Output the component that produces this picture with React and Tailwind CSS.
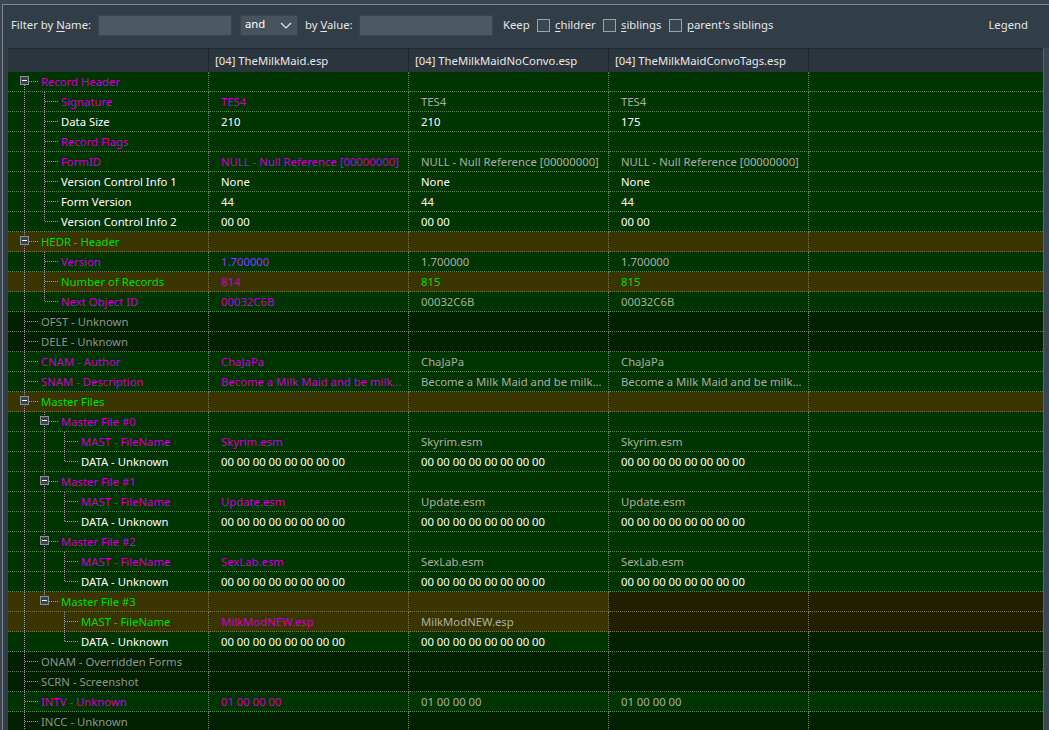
import React from 'react';

const M = 'text-[#cc00cc]';
const G = 'text-[#00dd00]';
const W = 'text-white';
const S = 'text-[#a9ada3]';
const L = 'text-[#8e938e]';
const P = 'text-[#8a3cff]';

const GREEN = 'bg-[#003400]';
const BROWN = 'bg-[#3a3400]';
const DARK = 'bg-[#002000]';
const DBROWN = 'bg-[#221f00]';

const BG = {
  g: [GREEN, GREEN, GREEN, GREEN, GREEN],
  b: [BROWN, BROWN, BROWN, BROWN, BROWN],
  d: [DARK, DARK, DARK, DARK, DARK],
  m: [BROWN, BROWN, BROWN, DBROWN, DBROWN],
  md: [GREEN, GREEN, GREEN, DARK, DARK],
};

const NULLREF = 'NULL - Null Reference [00000000]';
const DESC = 'Become a Milk Maid and be milk...';
const ZEROS = '00 00 00 00 00 00 00 00';

const same = (t, c1, c2 = c1) => [[t, c1], [t, c2], [t, c2]];

const master = (n, file) => [
  { t: `Master File #${n}`, l: 1, box: true, c: M, bg: 'g', v: [] },
  { t: 'MAST - FileName', l: 2, c: M, bg: 'g', v: [[file, M], [file, S], [file, S]] },
  { t: 'DATA - Unknown', l: 2, c: W, bg: 'g', v: same(ZEROS, W), last: true },
];

const rows = [
  { t: 'Record Header', l: 0, box: true, c: M, bg: 'g', v: [], first: true },
  { t: 'Signature', l: 1, c: M, bg: 'g', v: same('TES4', M, S) },
  { t: 'Data Size', l: 1, c: W, bg: 'g', v: [['210', W], ['210', W], ['175', W]] },
  { t: 'Record Flags', l: 1, c: M, bg: 'g', v: [] },
  { t: 'FormID', l: 1, c: M, bg: 'g', v: same(NULLREF, M, S) },
  { t: 'Version Control Info 1', l: 1, c: W, bg: 'g', v: same('None', W) },
  { t: 'Form Version', l: 1, c: W, bg: 'g', v: same('44', W) },
  { t: 'Version Control Info 2', l: 1, c: W, bg: 'g', v: same('00 00', W), last: true },
  { t: 'HEDR - Header', l: 0, box: true, c: G, bg: 'b', v: [] },
  { t: 'Version', l: 1, c: M, bg: 'g', v: [['1.700000', P], ['1.700000', S], ['1.700000', S]] },
  { t: 'Number of Records', l: 1, c: G, bg: 'b', v: [['814', M], ['815', G], ['815', G]] },
  { t: 'Next Object ID', l: 1, c: M, bg: 'g', v: same('00032C6B', M, S), last: true },
  { t: 'OFST - Unknown', l: 0, c: L, bg: 'd', v: [] },
  { t: 'DELE - Unknown', l: 0, c: L, bg: 'd', v: [] },
  { t: 'CNAM - Author', l: 0, c: M, bg: 'g', v: same('ChaJaPa', M, S) },
  { t: 'SNAM - Description', l: 0, c: M, bg: 'g', v: same(DESC, M, S) },
  { t: 'Master Files', l: 0, box: true, c: G, bg: 'b', v: [] },
  ...master(0, 'Skyrim.esm'),
  ...master(1, 'Update.esm'),
  ...master(2, 'SexLab.esm'),
  { t: 'Master File #3', l: 1, box: true, c: G, bg: 'm', v: [], last: true },
  { t: 'MAST - FileName', l: 2, c: G, bg: 'm', v: [['MilkModNEW.esp', M], ['MilkModNEW.esp', S]], tail: true },
  { t: 'DATA - Unknown', l: 2, c: W, bg: 'md', v: [[ZEROS, W], [ZEROS, W]], last: true, tail: true },
  { t: 'ONAM - Overridden Forms', l: 0, c: L, bg: 'd', v: [] },
  { t: 'SCRN - Screenshot', l: 0, c: L, bg: 'd', v: [] },
  { t: 'INTV - Unknown', l: 0, c: M, bg: 'g', v: same('01 00 00 00', M, S) },
  { t: 'INCC - Unknown', l: 0, c: L, bg: 'd', v: [] },
];

function Tree({ row }) {
  const { l, box, last, first, tail } = row;
  const anc = l === 0 ? [] : l === 1 ? [0] : tail ? [0] : [0, 1];
  const x = 16.5 + 20 * l;
  const line = { stroke: '#9a9d9a', strokeDasharray: '1 1', strokeWidth: 1 };
  return (
    <svg width={33 + 20 * l} height={19} className="shrink-0" shapeRendering="crispEdges">
      {anc.map((k) => (
        <line key={k} x1={16.5 + 20 * k} x2={16.5 + 20 * k} y1={0} y2={19} {...line} />
      ))}
      <line x1={x} x2={x} y1={first ? 9 : 0} y2={last ? 9.5 : 19} {...line} />
      <line x1={x} x2={x + 13} y1={9.5} y2={9.5} {...line} />
      {box && (
        <g>
          <rect x={x - 4} y={4.5} width={8} height={8} fill="#3b4149" stroke="#8b9198" />
          <line x1={x - 2.5} x2={x + 2.5} y1={8.5} y2={8.5} stroke="#ffffff" />
        </g>
      )}
    </svg>
  );
}

function Check({ u, rest }) {
  return (
    <div className="flex items-center">
      <span className="w-[13px] h-[13px] border border-[#9aa2aa] bg-[#3a4650] shrink-0" />
      <span className="ml-[5px] whitespace-nowrap">
        <span className="underline underline-offset-2">{u}</span>{rest}
      </span>
    </div>
  );
}

export default function App() {
  return (
    <div
      className="h-[730px] w-full overflow-hidden bg-[#3a4650] pt-[4px] pl-[2px] text-[11.3px] text-[#e4e6e8]"
      style={{ fontFamily: '"Noto Sans", "Open Sans", sans-serif' }}
    >
      <div className="h-full flex flex-col border-t border-l border-[#7c8590] bg-[#313d47]">
        <div className="h-[43px] shrink-0 flex items-center pb-[2px] pl-[8px] pr-[21px]">
          <span className="w-[87px] whitespace-nowrap">
            Filter by <span className="underline underline-offset-2">N</span>ame:
          </span>
          <div className="w-[134px] h-[21px] bg-[#4c5862] border border-[#3a444e]" />
          <div className="ml-[8px] w-[58px] h-[21px] bg-[#46525c] border border-[#3a444e] flex items-center justify-between pl-[4px] pr-[5px]">
            <span className="leading-none -mt-[3px] text-white">and</span>
            <svg width="12" height="7" viewBox="0 0 12 7">
              <path d="M1 1 L6 6 L11 1" fill="none" stroke="#e8eaec" strokeWidth="1.2" />
            </svg>
          </div>
          <span className="ml-[7px] w-[54px] whitespace-nowrap">
            by <span className="underline underline-offset-2">V</span>alue:
          </span>
          <div className="w-[134px] h-[21px] bg-[#4c5862] border border-[#3a444e]" />
          <span className="ml-[10px] w-[34px]">Keep</span>
          <div className="w-[66px]"><Check u="c" rest="hildrer" /></div>
          <div className="w-[66px]"><Check u="s" rest="iblings" /></div>
          <Check u="p" rest="arent's siblings" />
          <span className="ml-auto">Legend</span>
        </div>

        <div className="ml-[5px] flex-1 flex flex-col border-r-[5px] border-[#3a4650] overflow-hidden">
          <div className="flex flex-col flex-1 border-r border-[#5b6570] overflow-hidden">
            <div className="h-[24px] shrink-0 flex bg-[#2b353e] border-t border-[#222a31] text-[#e8e8e8]">
              <div className="w-[201px] border-r border-[#1e262d]" />
              {['[04] TheMilkMaid.esp', '[04] TheMilkMaidNoConvo.esp', '[04] TheMilkMaidConvoTags.esp'].map((h) => (
                <div key={h} className="w-[200px] border-r border-[#1e262d] pl-[6px] pt-[1px] flex items-center whitespace-nowrap">
                  {h}
                </div>
              ))}
              <div className="flex-1" />
            </div>

            {rows.map((r, i) => {
              const bg = BG[r.bg];
              return (
                <div key={i} className="h-[20px] shrink-0 flex">
                  <div className={`w-[201px] flex items-center border-r border-b border-dotted border-[#6c6f80] ${bg[0]}`}>
                    <Tree row={r} />
                    <span className={`whitespace-nowrap pt-[1px] ${r.c}`}>{r.t}</span>
                  </div>
                  {[0, 1, 2].map((k) => (
                    <div
                      key={k}
                      className={`w-[200px] flex items-center pl-[12px] pt-[1px] border-r border-b border-dotted border-[#6c6f80] overflow-hidden ${bg[k + 1]}`}
                    >
                      {r.v[k] && <span className={`whitespace-nowrap ${r.v[k][1]}`}>{r.v[k][0]}</span>}
                    </div>
                  ))}
                  <div className={`flex-1 border-b border-dotted border-[#6c6f80] ${bg[4]}`} />
                </div>
              );
            })}
          </div>
        </div>
      </div>
    </div>
  );
}
